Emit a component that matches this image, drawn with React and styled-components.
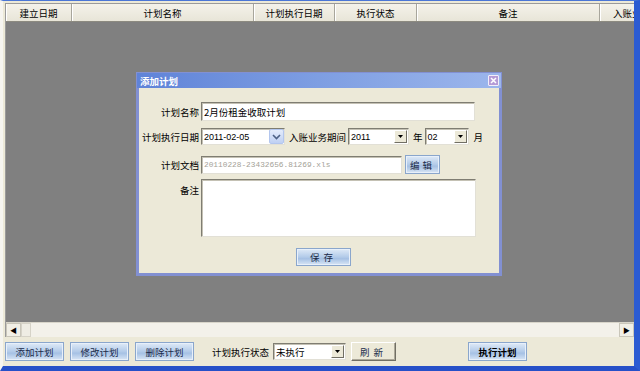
import React from "react";
import styled, { createGlobalStyle, css } from "styled-components";

const Global = createGlobalStyle`
  html, body {
    margin: 0;
    padding: 0;
    background: #ece9d8;
  }
  * {
    box-sizing: border-box;
  }
`;

const cjk = `"Noto Sans CJK SC", "Noto Sans", sans-serif`;

const Window = styled.div`
  position: relative;
  width: 640px;
  height: 371px;
  display: flex;
  flex-direction: column;
  background: #ece9d8;
  border-top: 1px solid #4a76d6;
  border-right: 6px solid #2b5bd2;
  border-bottom: 5px solid #2650c8;
  border-left: 3px solid #f6f5f0;
  font-family: ${cjk};
  font-size: 9.5px;
  color: #000;
`;

const GridArea = styled.div`
  flex: 1;
  display: flex;
  flex-direction: column;
  margin: 2px 0 0 2px;
  border-left: 1px solid #9a9a9a;
  border-top: 1px solid #9a9a9a;
  min-height: 0;
`;

const Header = styled.div`
  display: flex;
  height: 18px;
  overflow: hidden;
  background: linear-gradient(#f4f2ea, #e8e5d8);
  border-bottom: 1px solid #8c8a80;
`;

const HeadCell = styled.div`
  flex: none;
  width: ${(p) => p.$w}px;
  display: flex;
  align-items: center;
  justify-content: ${(p) => (p.$left ? "flex-start" : "center")};
  padding-left: ${(p) => (p.$left ? 13 : 0)}px;
  white-space: nowrap;
  border-right: 1px solid #a8a69c;
  box-shadow: inset 1px 0 0 #ffffff;
`;

const Body = styled.div`
  flex: 1;
  background: #808080;
`;

const HScroll = styled.div`
  display: flex;
  height: 15px;
  background: #f3f1ea;
  border-top: 1px solid #d8d5ca;
`;

const ScrollBtn = styled.div`
  width: 15px;
  height: 14px;
  display: flex;
  align-items: center;
  justify-content: center;
  background: #f1efe6;
  border: 1px solid #c9c6ba;
  font-size: 7px;
  color: #000;
`;

const Thumb = styled.div`
  width: 10px;
  height: 14px;
  background: #efede4;
  border: 1px solid #d6d3c8;
`;

const Track = styled.div`
  flex: 1;
`;

const Toolbar = styled.div`
  height: 29px;
  display: flex;
  align-items: center;
  padding: 0 0 0 2px;
`;

const blueBtn = css`
  background: linear-gradient(#dfeaf7, #b3cbe9 50%, #a6c1e4 60%, #d9e6f5);
  border: 1px solid #8aa6cc;
  box-shadow: inset 0 0 0 1px #e8f0fa;
`;

const Button = styled.div`
  flex: none;
  width: ${(p) => p.$w}px;
  height: ${(p) => p.$h || 19}px;
  margin-left: ${(p) => p.$ml || 0}px;
  display: flex;
  align-items: center;
  justify-content: center;
  font-family: ${cjk};
  font-size: 9.5px;
  font-weight: ${(p) => (p.$bold ? 700 : 400)};
  letter-spacing: ${(p) => p.$ls || 0}px;
  color: ${(p) => (p.$bold ? "#000" : "#1a2a48")};
  ${(p) =>
    p.$plain
      ? css`
          background: #ece9d8;
          border: 1px solid;
          border-color: #ffffff #716f64 #716f64 #ffffff;
          box-shadow: inset -1px -1px 0 #aca899;
        `
      : blueBtn}
`;

const Label = styled.span`
  flex: none;
  margin-left: ${(p) => p.$ml || 0}px;
  white-space: nowrap;
`;

const inset = css`
  background: #fff;
  border: 1px solid;
  border-color: #7f7d72 #e2e0d6 #e2e0d6 #7f7d72;
  box-shadow: inset 1px 1px 0 #c4c1b4;
`;

const Select = styled.div`
  ${inset};
  flex: none;
  width: ${(p) => p.$w}px;
  height: ${(p) => p.$h || 17}px;
  margin-left: ${(p) => p.$ml || 0}px;
  display: flex;
  align-items: center;
  padding-left: 2px;
  font-family: ${(p) => (p.$latin ? `"Liberation Sans", sans-serif` : cjk)};
  font-size: ${(p) => (p.$latin ? 9 : 9.5)}px;
`;

const SelectText = styled.span`
  flex: 1;
  white-space: nowrap;
`;

const ArrowBox = styled.div`
  flex: none;
  width: 13px;
  height: 13px;
  margin-right: 1px;
  display: flex;
  align-items: center;
  justify-content: center;
  ${(p) =>
    p.$xp
      ? css`
          width: 15px;
          height: 15px;
          margin-right: 0;
          background: linear-gradient(#e4ecfb, #bfd0f3);
          border: 1px solid #b3c6ee;
          border-radius: 2px;
        `
      : css`
          background: #ece9d8;
          border: 1px solid;
          border-color: #ffffff #716f64 #716f64 #ffffff;
        `}
`;

const Arrow = ({ xp }) =>
  xp ? (
    <svg width="9" height="6" viewBox="0 0 9 6">
      <path d="M1 1 L4.5 4.5 L8 1" fill="none" stroke="#4d6185" strokeWidth="1.6" />
    </svg>
  ) : (
    <svg width="5" height="3" viewBox="0 0 5 3">
      <path d="M0 0 H5 L2.5 3 Z" fill="#000" />
    </svg>
  );

const Dropdown = ({ w, h, ml, latin, xp, children }) => (
  <Select $w={w} $h={h} $ml={ml} $latin={latin}>
    <SelectText>{children}</SelectText>
    <ArrowBox $xp={xp}>
      <Arrow xp={xp} />
    </ArrowBox>
  </Select>
);

const Dialog = styled.div`
  position: absolute;
  left: 133px;
  top: 71px;
  width: 366px;
  height: 204px;
  display: flex;
  flex-direction: column;
  background: #ece9d8;
  border: 3px solid #8290d2;
  border-top-width: 1px;
`;

const TitleBar = styled.div`
  height: 15px;
  display: flex;
  align-items: center;
  justify-content: space-between;
  padding: 0 2px 0 3px;
  background: linear-gradient(to right, #5f83d8, #7e9ee2 50%, #9cb6ec);
  color: #fff;
  font-size: 9.5px;
  font-weight: 700;
  margin: 0 -2px;
`;

const Close = styled.div`
  width: 11px;
  height: 11px;
  display: flex;
  align-items: center;
  justify-content: center;
  background: #b59bd6;
  border: 1px solid #f3eefa;
  border-radius: 1px;
`;

const Form = styled.div`
  display: flex;
  flex-direction: column;
  padding-top: 14px;
`;

const Row = styled.div`
  display: flex;
  align-items: ${(p) => (p.$top ? "flex-start" : "center")};
  margin-top: ${(p) => p.$mt || 0}px;
`;

const FieldLabel = styled.div`
  flex: none;
  width: 62px;
  text-align: right;
  padding-right: 2px;
  padding-top: ${(p) => (p.$top ? 4 : 0)}px;
  white-space: nowrap;
`;

const TextBox = styled.div`
  ${inset};
  flex: none;
  width: ${(p) => p.$w}px;
  height: ${(p) => p.$h}px;
  display: flex;
  align-items: center;
  padding-left: 2px;
  font-family: ${(p) => (p.$mono ? `"Liberation Mono", monospace` : cjk)};
  font-size: ${(p) => (p.$mono ? 7.8 : 9.5)}px;
  color: ${(p) => (p.$mono ? "#a4a297" : "#000")};
  white-space: nowrap;
`;

const SaveRow = styled.div`
  display: flex;
  justify-content: center;
  padding-left: 9px;
  margin-top: 11px;
`;

const columns = [
  { w: 66, t: "建立日期" },
  { w: 182, t: "计划名称" },
  { w: 81, t: "计划执行日期" },
  { w: 82, t: "执行状态" },
  { w: 183, t: "备注" },
  { w: 80, t: "入账业务期间", left: true },
];

export default function App() {
  return (
    <>
      <Global />
      <Window>
        <GridArea>
          <Header>
            {columns.map((c) => (
              <HeadCell key={c.t} $w={c.w} $left={c.left}>
                {c.t}
              </HeadCell>
            ))}
          </Header>
          <Body />
          <HScroll>
            <ScrollBtn>◀</ScrollBtn>
            <Thumb />
            <Track />
            <ScrollBtn>▶</ScrollBtn>
          </HScroll>
        </GridArea>
        <Toolbar>
          <Button $w={59}>添加计划</Button>
          <Button $w={59} $ml={6}>修改计划</Button>
          <Button $w={59} $ml={6}>删除计划</Button>
          <Label $ml={18}>计划执行状态</Label>
          <Dropdown w={73} ml={4}>未执行</Dropdown>
          <Button $w={45} $ml={5} $plain $ls={4}>刷新</Button>
          <Button $w={59} $ml={72} $bold>执行计划</Button>
        </Toolbar>

        <Dialog>
          <TitleBar>
            <span>添加计划</span>
            <Close>
              <svg width="7" height="7" viewBox="0 0 7 7">
                <path d="M1 1 L6 6 M6 1 L1 6" stroke="#fff" strokeWidth="1.5" />
              </svg>
            </Close>
          </TitleBar>
          <Form>
            <Row>
              <FieldLabel>计划名称</FieldLabel>
              <TextBox $w={274} $h={19}>2月份租金收取计划</TextBox>
            </Row>
            <Row $mt={7}>
              <FieldLabel>计划执行日期</FieldLabel>
              <Dropdown w={84} h={17} latin xp>2011-02-05</Dropdown>
              <Label $ml={4}>入账业务期间</Label>
              <Dropdown w={61} ml={2} latin>2011</Dropdown>
              <Label $ml={4}>年</Label>
              <Dropdown w={44} ml={2} latin>02</Dropdown>
              <Label $ml={5}>月</Label>
            </Row>
            <Row $mt={10}>
              <FieldLabel>计划文档</FieldLabel>
              <TextBox $w={201} $h={18} $mono>20110228-23432656.81269.xls</TextBox>
              <Button $w={35} $ml={3} $ls={3}>编辑</Button>
            </Row>
            <Row $mt={5} $top>
              <FieldLabel $top>备注</FieldLabel>
              <TextBox $w={275} $h={58} />
            </Row>
            <SaveRow>
              <Button $w={55} $h={18} $ls={4}>保存</Button>
            </SaveRow>
          </Form>
        </Dialog>
      </Window>
    </>
  );
}
